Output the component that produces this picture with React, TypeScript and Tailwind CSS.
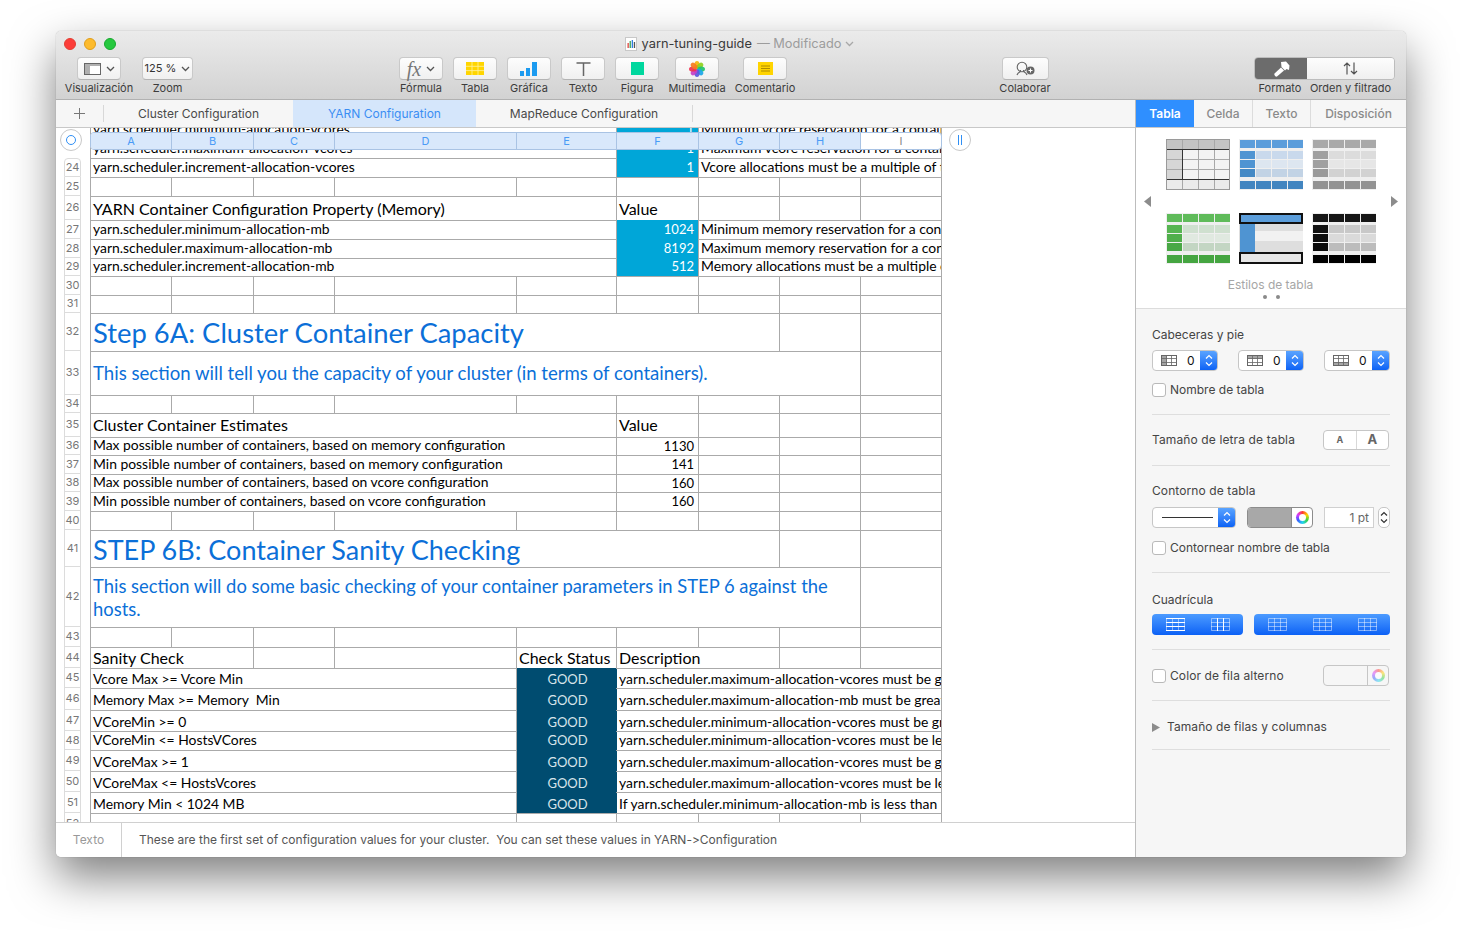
import React from 'react';

const UI = "font-['Inter','Liberation_Sans',sans-serif]";
const SHEET = "font-['Lato','Liberation_Sans',sans-serif]";

type Cell = { span: string; text?: React.ReactNode; cls?: string };
type Row = { n?: number; h: string; cells: Cell[]; first?: boolean };

const one = 'col-span-1';
const blank = (span: string): Cell => ({ span });
const allBlank: Cell[] = [one, one, one, one, one, one, one, one, one].map(blank);
const BASE = 'text-[13.9px]';
const HEAD = 'text-[16px]';
const TITLE = 'text-[27.2px] text-[#0b6fd8]';
const blue = 'bg-[#00a6d8] -mt-px justify-end text-white text-[13px] pr-[4px]';
const navy = 'bg-[#004c70] -mt-px justify-center text-[#d7e4ea] text-[13px]';

const memRow = (n: number | undefined, h: string, a: string, v: string, d: string): Row => ({
  n,
  h,
  cells: [
    { span: 'col-span-5', text: a, cls: `${BASE} pb-[2px]` },
    { span: one, text: v, cls: blue },
    { span: 'col-span-3', text: d, cls: `${BASE} pb-[2px]` },
  ],
});

const estRow = (n: number, h: string, a: string, v: string): Row => ({
  n,
  h,
  cells: [
    { span: 'col-span-5', text: a, cls: `${BASE} pb-[2px]` },
    { span: one, text: v, cls: 'text-[13px] justify-end pr-[4px]' },
    blank(one),
    blank(one),
    blank(one),
  ],
});

const checkRow = (n: number, h: string, a: string, d: string, shift: string, goodShift: string): Row => ({
  n,
  h,
  cells: [
    { span: 'col-span-4', text: a, cls: `${BASE} ${shift}` },
    { span: one, text: 'GOOD', cls: `${navy} ${goodShift}` },
    { span: 'col-span-4', text: d, cls: `${BASE} ${shift} border-l-[#004c70]` },
  ],
});

const ROWS: Row[] = [
  memRow(undefined, 'h-[19px]', 'yarn.scheduler.minimum-allocation-vcores', '1', 'Minimum vcore reservation for a container'),
  memRow(undefined, 'h-[19px]', 'yarn.scheduler.maximum-allocation-vcores', '1', 'Maximum vcore reservation for a container'),
  { ...memRow(24, 'h-[19px]', 'yarn.scheduler.increment-allocation-vcores', '1', 'Vcore allocations must be a multiple of this value'), first: true },
  { n: 25, h: 'h-[19px]', cells: allBlank },
  {
    n: 26,
    h: 'h-[24px]',
    cells: [
      { span: 'col-span-5', text: 'YARN Container Configuration Property (Memory)', cls: `${HEAD} pt-[1px]` },
      { span: one, text: 'Value', cls: `${HEAD} pt-[1px]` },
      blank(one),
      blank(one),
      blank(one),
    ],
  },
  memRow(27, 'h-[19px]', 'yarn.scheduler.minimum-allocation-mb', '1024', 'Minimum memory reservation for a container'),
  memRow(28, 'h-[19px]', 'yarn.scheduler.maximum-allocation-mb', '8192', 'Maximum memory reservation for a container'),
  memRow(29, 'h-[18px]', 'yarn.scheduler.increment-allocation-mb', '512', 'Memory allocations must be a multiple of this'),
  { n: 30, h: 'h-[19px]', cells: allBlank },
  { n: 31, h: 'h-[18px]', cells: allBlank },
  {
    n: 32,
    h: 'h-[38px]',
    cells: [{ span: 'col-span-7', text: 'Step 6A: Cluster Container Capacity', cls: `${TITLE} text-[27.4px]` }, blank(one), blank(one)],
  },
  {
    n: 33,
    h: 'h-[44px]',
    cells: [
      { span: 'col-span-8', text: 'This section will tell you the capacity of your cluster (in terms of containers).', cls: 'text-[18.6px] text-[#0b6fd8]' },
      blank(one),
    ],
  },
  { n: 34, h: 'h-[18px]', cells: allBlank },
  {
    n: 35,
    h: 'h-[24px]',
    cells: [
      { span: 'col-span-5', text: 'Cluster Container Estimates', cls: `${HEAD} pb-[2px]` },
      { span: one, text: 'Value', cls: `${HEAD} pb-[2px]` },
      blank(one),
      blank(one),
      blank(one),
    ],
  },
  estRow(36, 'h-[18px]', 'Max possible number of containers, based on memory configuration', '1130'),
  estRow(37, 'h-[19px]', 'Min possible number of containers, based on memory configuration', '141'),
  estRow(38, 'h-[18px]', 'Max possible number of containers, based on vcore configuration', '160'),
  estRow(39, 'h-[19px]', 'Min possible number of containers, based on vcore configuration', '160'),
  { n: 40, h: 'h-[19px]', cells: allBlank },
  {
    n: 41,
    h: 'h-[37px]',
    cells: [{ span: 'col-span-7', text: 'STEP 6B: Container Sanity Checking', cls: `${TITLE} pt-[2px] text-[27px]` }, blank(one), blank(one)],
  },
  {
    n: 42,
    h: 'h-[60px]',
    cells: [
      {
        span: 'col-span-8',
        text: (
          <span className="leading-[23px] whitespace-normal">
            This section will do some basic checking of your container parameters in STEP 6 against the hosts.
          </span>
        ),
        cls: 'text-[18.4px] text-[#0b6fd8] pt-[1px]',
      },
      blank(one),
    ],
  },
  { n: 43, h: 'h-[20px]', cells: allBlank },
  {
    n: 44,
    h: 'h-[21px]',
    cells: [
      { span: 'col-span-2', text: 'Sanity Check', cls: HEAD },
      blank(one),
      blank(one),
      { span: one, text: 'Check Status', cls: HEAD },
      { span: 'col-span-2', text: 'Description', cls: HEAD },
      blank(one),
      blank(one),
    ],
  },
  checkRow(45, 'h-[20px]', 'Vcore Max >= Vcore Min', 'yarn.scheduler.maximum-allocation-vcores must be greater than', 'pt-[2px]', 'pt-[4px]'),
  checkRow(46, 'h-[22px]', 'Memory Max >= Memory  Min', 'yarn.scheduler.maximum-allocation-mb must be greater than', 'pt-[2px]', 'pt-[4px]'),
  checkRow(47, 'h-[21px]', 'VCoreMin >= 0', 'yarn.scheduler.minimum-allocation-vcores must be greater than', 'pt-[2px]', 'pt-[4px]'),
  checkRow(48, 'h-[19px]', 'VCoreMin <= HostsVCores', 'yarn.scheduler.minimum-allocation-vcores must be less than', 'pb-[2px]', ''),
  checkRow(49, 'h-[21px]', 'VCoreMax >= 1', 'yarn.scheduler.maximum-allocation-vcores must be greater than', 'pt-[2px]', 'pt-[4px]'),
  checkRow(50, 'h-[21px]', 'VCoreMax <= HostsVcores', 'yarn.scheduler.maximum-allocation-vcores must be less than', 'pt-[2px]', 'pt-[4px]'),
  checkRow(51, 'h-[21px]', 'Memory Min < 1024 MB', 'If yarn.scheduler.minimum-allocation-mb is less than 1024', 'pt-[2px]', 'pt-[4px]'),
  {
    n: 52,
    h: 'h-[21px]',
    cells: [blank('col-span-4'), blank(one), blank(one), blank(one), blank(one), blank(one)],
  },
];

function Chevron({ className = 'text-[#555]' }: { className?: string }) {
  return (
    <svg width="9" height="6" viewBox="0 0 9 6" fill="none" className={className}>
      <path d="M1 1l3.5 3.5L8 1" stroke="currentColor" strokeWidth="1.3" />
    </svg>
  );
}

function UpDown({ color = 'white' }: { color?: string }) {
  return (
    <svg width="8" height="13" viewBox="0 0 8 13" fill="none">
      <path d="M1 4.5L4 1.5 7 4.5M1 8.5L4 11.5 7 8.5" stroke={color} strokeWidth="1.2" />
    </svg>
  );
}

function ToolItem({ label, slot, children, btn = 'w-[44px]' }: { label: string; slot: string; children: React.ReactNode; btn?: string }) {
  return (
    <div className={`flex flex-col items-center ${slot}`}>
      <div
        className={`${btn} h-[23px] flex items-center justify-center gap-[5px] rounded-[4px] bg-linear-to-b from-[#fdfdfd] to-[#f0f0f0] border border-[#c9c9c9] border-b-[#b4b4b4]`}
      >
        {children}
      </div>
      <span className="text-[11px] leading-[16px] text-[#3c3c3c] whitespace-nowrap">{label}</span>
    </div>
  );
}

function Flower() {
  const petals = ['#f5b30c', '#8fd01c', '#1fc36b', '#1aa6e8', '#5a56dc', '#c63fc6', '#f0304f', '#f57a1f'];
  return (
    <svg width="16" height="16" viewBox="0 0 16 16">
      {petals.map((c, i) => (
        <ellipse key={c} cx="8" cy="3.8" rx="2.6" ry="3.8" fill={c} opacity="0.92" transform={`rotate(${i * 45} 8 8)`} />
      ))}
    </svg>
  );
}

function Toolbar() {
  return (
    <div className="relative h-[69px] shrink-0 bg-linear-to-b from-[#ebebeb] to-[#d2d2d2] border-b border-[#b1b1b1] rounded-t-[5px]">
      <div className="flex items-center h-[26px] pl-[8px] gap-[8px]">
        <span className="w-[12px] h-[12px] rounded-full bg-[#fc3d39] border border-[#e33e32]" />
        <span className="w-[12px] h-[12px] rounded-full bg-[#fdbb2d] border border-[#e09e1a]" />
        <span className="w-[12px] h-[12px] rounded-full bg-[#26c83f] border border-[#17a92e]" />
        <div className="flex-1 flex items-center justify-center pr-[51px] text-[12.8px] whitespace-nowrap">
          <svg width="12" height="14" viewBox="0 0 12 14" className="mr-[5px]">
            <rect x="0.5" y="0.5" width="11" height="13" fill="#fff" stroke="#c8c8c8" />
            <rect x="2.5" y="6" width="1.3" height="5" fill="#e0443e" />
            <rect x="4.6" y="4" width="1.3" height="7" fill="#3aa655" />
            <rect x="6.7" y="3" width="1.3" height="8" fill="#2f7fe0" />
            <rect x="8.8" y="5" width="1.3" height="6" fill="#555" />
          </svg>
          <span className="text-[#3a3a3a]">yarn-tuning-guide</span>
          <span className="ml-[5px] text-[#9c9c9c]">— Modificado</span>
          <span className="ml-[4px]"><Chevron className="text-[#a8a8a8]" /></span>
        </div>
      </div>
      <div className="flex pl-[9px]">
        <ToolItem label="Visualización" slot="w-[68px]">
          <svg width="17" height="12" viewBox="0 0 17 12">
            <rect x="0.5" y="0.5" width="16" height="11" fill="#fff" stroke="#666" />
            <rect x="1" y="1" width="5" height="10" fill="#b0b0b0" />
            <rect x="1" y="1" width="15" height="2" fill="#b0b0b0" />
          </svg>
          <Chevron />
        </ToolItem>
        <ToolItem label="Zoom" slot="w-[69px]" btn="w-[51px]">
          <span className="text-[11px] text-[#333]">125 %</span>
          <Chevron />
        </ToolItem>
        <ToolItem label="Fórmula" slot="w-[54px] ml-[192px]">
          <span className="font-['Liberation_Serif',serif] italic text-[20px] leading-none text-[#777]">fx</span>
          <Chevron />
        </ToolItem>
        <ToolItem label="Tabla" slot="w-[54px]">
          <svg width="18" height="13" viewBox="0 0 18 13">
            <rect width="18" height="13" fill="#ffd500" />
            <path d="M0 4.3h18M0 8.6h18M6 0v13M12 0v13" stroke="#fff3a0" strokeWidth="0.8" />
          </svg>
        </ToolItem>
        <ToolItem label="Gráfica" slot="w-[54px]">
          <svg width="18" height="14" viewBox="0 0 18 14">
            <rect x="0" y="9" width="4" height="5" fill="#1c9bf0" />
            <rect x="6" y="6" width="4" height="8" fill="#1c9bf0" />
            <rect x="12" y="0" width="5" height="14" fill="#1c9bf0" />
          </svg>
        </ToolItem>
        <ToolItem label="Texto" slot="w-[54px]">
          <svg width="15" height="14" viewBox="0 0 15 14">
            <path d="M0.5 1h14M7.5 1v13" stroke="#666" strokeWidth="1.5" fill="none" />
          </svg>
        </ToolItem>
        <ToolItem label="Figura" slot="w-[54px]">
          <span className="w-[13px] h-[13px] bg-[#00d79e]" />
        </ToolItem>
        <ToolItem label="Multimedia" slot="w-[66px]">
          <Flower />
        </ToolItem>
        <ToolItem label="Comentario" slot="w-[70px]">
          <svg width="15" height="13" viewBox="0 0 15 13">
            <rect width="15" height="13" fill="#ffd400" />
            <path d="M3 4h9M3 6.5h9M3 9h9" stroke="#9a7a00" strokeWidth="0.8" />
          </svg>
        </ToolItem>
        <ToolItem label="Colaborar" slot="w-[54px] ml-[198px]" btn="w-[47px]">
          <svg width="21" height="15" viewBox="0 0 21 15" fill="none">
            <circle cx="7" cy="6" r="4.8" stroke="#666" strokeWidth="1.1" />
            <path d="M2 14c.5-2 2.5-3 3.5-3.5V9M12 14c-.5-2-2.5-3-3.5-3.5V9" stroke="#666" strokeWidth="1.1" />
            <circle cx="15.5" cy="9.5" r="4" fill="#666" />
            <path d="M15.5 7.5v4M13.5 9.5h4" stroke="#fff" strokeWidth="1.1" />
          </svg>
        </ToolItem>
        <div className="ml-[202px] w-[141px] flex flex-col">
          <div className="flex h-[23px] rounded-[4px] border border-[#bdbdbd] overflow-hidden">
            <div className="w-[52px] bg-[#6c6c6c] flex items-center justify-center">
              <svg width="17" height="16" viewBox="0 0 17 16" fill="#fff">
                <path d="M8 1l5-.5 3.5 4L16 9l-2.500-1-1.500 1.500L8.500 6z" />
                <path d="M8 6.500l3 3L4 15.500c-1 .8-3.500-1.500-2.500-3z" />
              </svg>
            </div>
            <div className="flex-1 bg-linear-to-b from-[#fdfdfd] to-[#f0f0f0] flex items-center justify-center">
              <svg width="15" height="13" viewBox="0 0 15 13" fill="none" stroke="#555" strokeWidth="1.2">
                <path d="M4 12.500V1M1 4l3-3 3 3M11 .5V12M8 9l3 3 3-3" />
              </svg>
            </div>
          </div>
          <div className="flex text-[11px] leading-[16px] text-[#3c3c3c] whitespace-nowrap">
            <span className="w-[52px] text-center">Formato</span>
            <span className="flex-1 text-center">Orden y filtrado</span>
          </div>
        </div>
      </div>
    </div>
  );
}

function SheetTabs() {
  return (
    <div className="h-[28px] shrink-0 flex items-stretch bg-[#f6f6f6] border-b border-[#c8c8c8] text-[12px]">
      <div className="w-[47px] flex items-center justify-center">
        <svg width="11" height="11" viewBox="0 0 11 11" stroke="#777" strokeWidth="1">
          <path d="M5.500 0v11M0 5.500h11" />
        </svg>
      </div>
      <div className="my-[5px] border-l border-[#d8d8d8]" />
      <div className="w-[189px] flex items-center justify-center text-[#4a4a4a]">Cluster Configuration</div>
      <div className="w-[183px] flex items-center justify-center bg-[#d5e6fb] text-[#3b8ef3]">YARN Configuration</div>
      <div className="w-[216px] flex items-center justify-center text-[#4a4a4a]">MapReduce Configuration</div>
      <div className="my-[5px] border-l border-[#d8d8d8]" />
    </div>
  );
}

function Sheet() {
  return (
    <div className="relative flex-1 min-h-0 overflow-hidden bg-white">
      <div className={`-mt-[8px] ${SHEET} text-black`}>
        {ROWS.map((row, i) => (
          <div key={i} className={`flex ${row.h}`}>
            <div className="ml-[8px] w-[17px] shrink-0">
              {row.n !== undefined && (
                <div
                  className={`h-full flex items-center justify-center border-x border-b border-[#dcdcdc] text-[11px] text-[#777] ${UI} ${
                    row.first ? 'border-t rounded-t-[4px]' : ''
                  }`}
                >
                  {row.n}
                </div>
              )}
            </div>
            <div className="ml-[9px] w-[852px] grid grid-cols-[81px_82px_81px_182px_100px_82px_81px_81px_82px] border-t border-[#aaaaaa]">
              {row.cells.map((c, j) => (
                <div
                  key={j}
                  className={`${c.span} flex items-center overflow-hidden whitespace-pre pl-[2px] border-l border-[#aaaaaa] ${
                    j === row.cells.length - 1 ? 'border-r' : ''
                  } ${c.cls ?? ''}`}
                >
                  {c.text}
                </div>
              ))}
            </div>
          </div>
        ))}
      </div>

      {/* floating column header and table handles */}
      <div className="absolute left-[34px] top-[4px] w-[852px] h-[18px] flex rounded-[4px] overflow-hidden border border-[#a9c3e4] text-[11px] text-[#4a9bf6] bg-white">
        {[
          ['A', 'w-[81px]'],
          ['B', 'w-[82px]'],
          ['C', 'w-[81px]'],
          ['D', 'w-[182px]'],
          ['E', 'w-[100px]'],
          ['F', 'w-[82px]'],
          ['G', 'w-[81px]'],
          ['H', 'w-[81px]'],
        ].map(([l, w]) => (
          <div key={l} className={`${w} flex items-center justify-center bg-[#d9e8fb] border-r border-[#a9c3e4]`}>
            {l}
          </div>
        ))}
        <div className="flex-1 flex items-center justify-center text-[#888]">I</div>
      </div>
      <div className="absolute left-[4px] top-[1px] w-[22px] h-[22px] rounded-full bg-white border border-[#c8c8c8] flex items-center justify-center">
        <span className="w-[10px] h-[10px] rounded-full border-[1.5px] border-[#2f8ff5]" />
      </div>
      <div className="absolute left-[893px] top-[1px] w-[22px] h-[22px] rounded-full bg-white border border-[#c8c8c8] flex items-center justify-center gap-[2px]">
        <span className="w-px h-[10px] bg-[#2f8ff5]" />
        <span className="w-px h-[10px] bg-[#2f8ff5]" />
      </div>
    </div>
  );
}

function StatusBar() {
  return (
    <div className="h-[35px] shrink-0 flex border-t border-[#d0d0d0] bg-white text-[12px] rounded-bl-[5px]">
      <div className="w-[66px] flex items-center justify-center border-r border-[#d0d0d0] text-[#999]">Texto</div>
      <div className="pl-[17px] flex items-center text-[#555] whitespace-pre [font-variant-ligatures:none]">
        These are the first set of configuration values for your cluster.  You can set these values in YARN-&gt;Configuration
      </div>
    </div>
  );
}

type Thumb = { head: string; side: string[]; body: string[]; foot: string; bg?: string };

function StyleThumb({ head, side, body, foot, bg = '#efefef' }: Thumb) {
  const xs = [1, 17, 33, 49];
  const ys = [12, 21, 30];
  return (
    <svg width="64" height="51" viewBox="0 0 64 51">
      <rect width="64" height="51" fill={bg} />
      {xs.map((x) => (
        <React.Fragment key={x}>
          <rect x={x} y="1" width="15" height="8" fill={head} />
          <rect x={x} y="42" width="15" height="8" fill={foot} />
        </React.Fragment>
      ))}
      {ys.map((y, r) =>
        xs.map((x, c) => <rect key={`${x}-${y}`} x={x} y={y} width="15" height="8" fill={c === 0 ? side[r] : body[r]} />),
      )}
    </svg>
  );
}

function PlainThumb() {
  return (
    <svg width="64" height="51" viewBox="0 0 64 51">
      <rect x="0.5" y="0.5" width="63" height="50" fill="#f3f3f3" stroke="#9a9a9a" />
      <rect x="1" y="1" width="62" height="9" fill="#c4c4c4" />
      <rect x="1" y="10" width="15" height="30" fill="#d6d6d6" />
      <rect x="1" y="40" width="62" height="10" fill="#ebebeb" />
      <path d="M16.500 1v49M32.500 1v49M48.500 1v49M1 20.500h62M1 30.500h62" stroke="#a8a8a8" fill="none" />
      <path d="M1 10.500h62M16.500 10v30M1 40.500h62" stroke="#333" fill="none" />
    </svg>
  );
}

function BoxThumb() {
  return (
    <svg width="64" height="51" viewBox="0 0 64 51">
      <rect width="64" height="51" fill="#dedede" />
      <rect x="16" y="18" width="48" height="10" fill="#f1f1f1" />
      <rect x="1" y="10" width="15" height="29" fill="#4f94d2" />
      <rect x="1" y="1" width="62" height="9" fill="#5c9edb" stroke="#111" strokeWidth="2" />
      <rect x="1" y="40" width="62" height="10" fill="#e6e6e6" stroke="#111" strokeWidth="2" />
    </svg>
  );
}

function Divider({ cls }: { cls: string }) {
  return <div className={`${cls} border-t border-[#dedede]`} />;
}

function CheckBox({ label, cls }: { label: string; cls: string }) {
  return (
    <div className={`flex items-center gap-[4px] leading-[16px] ${cls}`}>
      <span className="w-[14px] h-[14px] rounded-[3px] bg-white border border-[#b9b9b9]" />
      <span>{label}</span>
    </div>
  );
}

function HeaderStepper({ fill }: { fill: 'side' | 'top' | 'bottom' }) {
  return (
    <div className="w-[66px] h-[21px] flex rounded-[4px] overflow-hidden border border-[#c6c6c6] bg-white">
      <div className="flex-1 flex items-center pl-[8px] gap-[10px] text-[#111]">
        <svg width="16" height="11" viewBox="0 0 16 11">
          <rect x="0.5" y="0.5" width="15" height="10" fill="#fff" stroke="#666" />
          {fill === 'side' && <rect x="1" y="1" width="5" height="9" fill="#a5a5a5" />}
          {fill === 'top' && <rect x="1" y="1" width="14" height="3" fill="#a5a5a5" />}
          {fill === 'bottom' && <rect x="1" y="7" width="14" height="3" fill="#a5a5a5" />}
          <path d="M5.500 0v11M10.500 0v11M0 3.500h16M0 7.500h16" stroke="#666" strokeWidth="0.8" />
        </svg>
        <span className="text-[12px]">0</span>
      </div>
      <div className="w-[17px] bg-linear-to-b from-[#59a3ff] to-[#0b62f5] flex items-center justify-center">
        <UpDown />
      </div>
    </div>
  );
}

function Wheel({ faded }: { faded?: boolean }) {
  return (
    <div
      className={`w-[13px] h-[13px] rounded-full flex items-center justify-center bg-[conic-gradient(#ff3b30,#ffd500,#35d04a,#22d3ee,#3b5bff,#d63bff,#ff3b30)] ${
        faded ? 'opacity-50' : ''
      }`}
    >
      <span className="w-[7px] h-[7px] rounded-full bg-white" />
    </div>
  );
}

function GridGlyph({ active }: { active?: 'h' | 'v' }) {
  return (
    <svg width="19" height="13" viewBox="0 0 19 13" fill="none">
      <path d="M.5 .5h18v12H.5zM6.500 0v13M12.500 0v13M0 4.500h19M0 8.500h19" stroke="#fff" strokeOpacity="0.45" />
      {active === 'h' && <path d="M0 .5h19M0 4.500h19M0 8.500h19M0 12.500h19" stroke="#fff" />}
      {active === 'v' && <path d="M6.500 0v13M12.500 0v13" stroke="#fff" />}
    </svg>
  );
}

function Inspector() {
  const thumbs: Thumb[] = [
    { head: '#5b9ddb', side: ['#4f94d2', '#4f94d2', '#4489c5'], body: ['#c9d9ec', '#dde6f0', '#c2d3e5'], foot: '#4285c0' },
    { head: '#a9a9a9', side: ['#a0a0a0', '#a0a0a0', '#9a9a9a'], body: ['#dcdcdc', '#e6e6e6', '#d2d2d2'], foot: '#939393' },
    { head: '#5fbb5a', side: ['#57b552', '#50af4b', '#49a845'], body: ['#cfe0cf', '#e0e9e0', '#c3d6c3'], foot: '#45a541' },
    { head: '#161616', side: ['#111', '#0e0e0e', '#0a0a0a'], body: ['#c8c8c8', '#dadada', '#bcbcbc'], foot: '#000' },
  ];
  return (
    <div className="w-[271px] shrink-0 flex flex-col border-l border-[#bdbdbd] bg-[#f6f6f6] text-[12px] text-[#444] rounded-br-[5px]">
      <div className="h-[28px] shrink-0 flex border-b border-[#c8c8c8] text-[#8a8a8a] font-medium">
        <div className="w-[58px] flex items-center justify-center bg-[#2f8fff] text-white font-semibold">Tabla</div>
        <div className="w-[59px] flex items-center justify-center border-r border-[#dcdcdc]">Celda</div>
        <div className="w-[58px] flex items-center justify-center border-r border-[#dcdcdc]">Texto</div>
        <div className="flex-1 flex items-center justify-center">Disposición</div>
      </div>

      <div className="h-[181px] shrink-0 bg-white border-b border-[#dcdcdc] pt-[11px]">
        <div className="flex items-center pl-[8px]">
          <svg width="7" height="11" viewBox="0 0 7 11" fill="#8c8c8c">
            <path d="M7 0v11L0 5.500z" />
          </svg>
          <div className="mx-[15px] grid grid-cols-[64px_64px_64px] gap-x-[9px] gap-y-[23px]">
            <PlainThumb />
            <StyleThumb {...thumbs[0]} />
            <StyleThumb {...thumbs[1]} />
            <StyleThumb {...thumbs[2]} />
            <BoxThumb />
            <StyleThumb {...thumbs[3]} />
          </div>
          <svg width="7" height="11" viewBox="0 0 7 11" fill="#8c8c8c">
            <path d="M0 0v11l7-5.500z" />
          </svg>
        </div>
        <div className="mt-[13px] text-center leading-[16px] text-[#a6a6a6] pr-[1px]">Estilos de tabla</div>
        <div className="mt-[2px] flex justify-center gap-[9px]">
          <span className="w-[4px] h-[4px] rounded-full bg-[#8a8a8a]" />
          <span className="w-[4px] h-[4px] rounded-full bg-[#8a8a8a]" />
        </div>
      </div>

      <div className="px-[16px]">
        <div className="mt-[18px] leading-[16px]">Cabeceras y pie</div>
        <div className="mt-[7px] flex justify-between">
          <HeaderStepper fill="side" />
          <HeaderStepper fill="top" />
          <HeaderStepper fill="bottom" />
        </div>
        <CheckBox label="Nombre de tabla" cls="mt-[11px]" />
        <Divider cls="mt-[16px]" />

        <div className="mt-[15px] flex items-center justify-between pr-px">
          <span className="tracking-[0.12px]">Tamaño de letra de tabla</span>
          <div className="w-[66px] h-[20px] flex rounded-[4px] overflow-hidden border border-[#c6c6c6] bg-white text-[#666] font-bold">
            <span className="flex-1 flex items-center justify-center text-[9px] border-r border-[#d8d8d8]">A</span>
            <span className="flex-1 flex items-center justify-center text-[13px]">A</span>
          </div>
        </div>
        <Divider cls="mt-[15px]" />

        <div className="mt-[17px] leading-[16px] tracking-[0.1px]">Contorno de tabla</div>
        <div className="mt-[8px] flex items-center">
          <div className="w-[84px] h-[21px] flex rounded-[4px] overflow-hidden border border-[#c6c6c6] bg-white">
            <div className="flex-1 flex items-center pl-[9px] pr-[5px]">
              <div className="w-full border-t border-[#333]" />
            </div>
            <div className="w-[17px] bg-linear-to-b from-[#59a3ff] to-[#0b62f5] flex items-center justify-center">
              <UpDown />
            </div>
          </div>
          <div className="ml-[11px] w-[66px] h-[21px] flex rounded-[4px] overflow-hidden border border-[#8c8c8c] bg-white">
            <div className="flex-1 bg-[#a8a8a8] border-r border-[#8c8c8c]" />
            <div className="w-[20px] flex items-center justify-center">
              <Wheel />
            </div>
          </div>
          <div className="ml-[11px] w-[50px] h-[21px] flex items-center justify-end pr-[4px] bg-white border border-[#d0d0d0] text-[#666]">
            1 pt
          </div>
          <div className="ml-[4px] w-[12px] h-[21px] rounded-[5px] flex items-center justify-center bg-white border border-[#c6c6c6]">
            <UpDown color="#333" />
          </div>
        </div>
        <CheckBox label="Contornear nombre de tabla" cls="mt-[12px]" />
        <Divider cls="mt-[16px]" />

        <div className="mt-[19px] leading-[16px]">Cuadrícula</div>
        <div className="mt-[6px] flex justify-between">
          <div className="w-[91px] h-[21px] flex items-center justify-center gap-[26px] rounded-[4px] bg-linear-to-b from-[#4c9bff] to-[#0a60f5]">
            <GridGlyph active="h" />
            <GridGlyph active="v" />
          </div>
          <div className="w-[136px] h-[21px] flex items-center justify-center gap-[26px] rounded-[4px] bg-linear-to-b from-[#4c9bff] to-[#0a60f5]">
            <GridGlyph />
            <GridGlyph />
            <GridGlyph />
          </div>
        </div>
        <Divider cls="mt-[14px]" />

        <div className="mt-[15px] flex items-center justify-between pr-px">
          <CheckBox label="Color de fila alterno" cls="tracking-[0.1px]" />
          <div className="w-[66px] h-[21px] flex rounded-[4px] overflow-hidden border border-[#c6c6c6]">
            <div className="flex-1 border-r border-[#c6c6c6]" />
            <div className="w-[20px] flex items-center justify-center">
              <Wheel faded />
            </div>
          </div>
        </div>
        <Divider cls="mt-[14px]" />

        <div className="mt-[18px] flex items-center leading-[16px]">
          <svg width="8" height="9" viewBox="0 0 8 9" fill="#8c8c8c">
            <path d="M0 0l8 4.500L0 9z" />
          </svg>
          <span className="ml-[7px] tracking-[0.08px]">Tamaño de filas y columnas</span>
        </div>
        <Divider cls="mt-[14px]" />
      </div>
    </div>
  );
}

export default function App() {
  return (
    <div className={`w-[1462px] h-[937px] overflow-hidden bg-white pt-[31px] pl-[56px] ${UI}`}>
      <div className="w-[1350px] h-[826px] flex flex-col rounded-[5px] shadow-[0_20px_45px_rgba(0,0,0,0.5),0_0_1px_rgba(0,0,0,0.4)]">
        <Toolbar />
        <div className="flex-1 min-h-0 flex">
          <div className="flex-1 min-w-0 flex flex-col">
            <SheetTabs />
            <Sheet />
            <StatusBar />
          </div>
          <Inspector />
        </div>
      </div>
    </div>
  );
}
